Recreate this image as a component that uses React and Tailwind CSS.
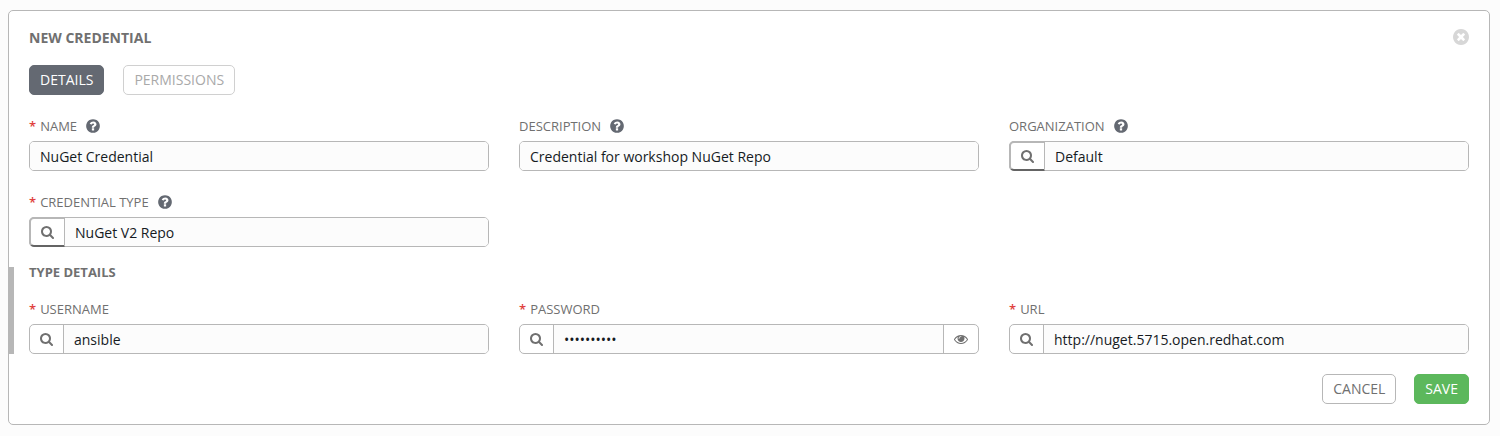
import { useId, useState } from "react";

const PATHS = {
  search:
    "M1216 832q0-185-131.5-316.5t-316.5-131.5-316.5 131.5-131.5 316.5 131.5 316.5 316.5 131.5 316.5-131.5 131.5-316.5zm512 832q0 52-38 90t-90 38q-54 0-90-38l-343-342q-179 124-399 124-143 0-273.5-55.5t-225-150-150-225-55.5-273.5 55.5-273.5 150-225 225-150 273.5-55.5 273.5 55.5 225 150 150 225 55.5 273.5q0 220-124 399l343 343q37 37 37 90z",
  help:
    "M1024 1376v-192q0-14-9-23t-23-9h-192q-14 0-23 9t-9 23v192q0 14 9 23t23 9h192q14 0 23-9t9-23zm256-672q0-88-55.5-163t-138.5-116-170-41q-243 0-371 213-15 24 8 42l132 100q7 6 19 6 16 0 25-12 53-68 86-92 34-24 86-24 48 0 85.5 26t37.5 59q0 38-20 61t-68 45q-63 28-115.5 86.5t-52.5 125.5v36q0 14 9 23t23 9h192q14 0 23-9t9-23q0-19 21.5-49.5t54.5-49.5q32-18 49-28.5t46-35 44.5-48 28-60.5 12.5-81zm384 192q0 209-103 385.5t-279.5 279.5-385.5 103-385.5-103-279.5-279.5-103-385.5 103-385.5 279.5-279.5 385.5-103 385.5 103 279.5 279.5 103 385.5z",
  close:
    "M1277 1122q0-26-19-45l-181-181 181-181q19-19 19-45 0-27-19-46l-90-90q-19-19-46-19-26 0-45 19l-181 181-181-181q-19-19-45-19-27 0-46 19l-90 90q-19 19-19 46 0 26 19 45l181 181-181 181q-19 19-19 45 0 27 19 46l90 90q19 19 46 19 26 0 45-19l181-181 181 181q19 19 45 19 27 0 46-19l90-90q19-19 19-46zm387-226q0 209-103 385.5t-279.5 279.5-385.5 103-385.5-103-279.5-279.5-103-385.5 103-385.5 279.5-279.5 385.5-103 385.5 103 279.5 279.5 103 385.5z",
  eye:
    "M1664 960q-152-236-381-353 61 104 61 225 0 185-131.5 316.5t-316.5 131.5-316.5-131.5-131.5-316.5q0-121 61-225-229 117-381 353 133 205 333.5 326.5t434.5 121.5 434.5-121.5 333.5-326.5zm-720-384q0-20-14-34t-34-14q-125 0-214.5 89.5t-89.5 214.5q0 20 14 34t34 14 34-14 14-34q0-86 61-147t147-61q20 0 34-14t14-34zm848 384q0 34-20 69-140 230-376.5 368.5t-499.5 138.5-499.5-139-376.5-368q-20-35-20-69t20-69q140-229 376.5-368t499.5-139 499.5 139 376.5 368q20 35 20 69z",
};

function Icon({ name, className, viewBox = "0 0 1792 1792" }) {
  return (
    <svg viewBox={viewBox} fill="currentColor" aria-hidden="true" className={className}>
      <path d={PATHS[name]} />
    </svg>
  );
}

function Field({ label, value, required, help, lookup, search, secret }) {
  const id = useId();
  const [text, setText] = useState(value);
  const [shown, setShown] = useState(false);
  return (
    <div className="flex min-w-0 flex-col gap-1">
      <div className="flex h-[22px] items-center">
        <label htmlFor={id} className="text-[13px] leading-[22px] text-[#707070]">
          {required && <span className="mr-1 font-semibold text-[#e0403c]">*</span>}
          {label}
        </label>
        {help && (
          <button type="button" aria-label={`Help for ${label}`} className="ml-2 text-[#646972]">
            <Icon name="help" className="size-4" />
          </button>
        )}
      </div>
      <div className="flex h-[30px] rounded-[5px] border border-[#b7b7b7] bg-white">
        {lookup && (
          <button
            type="button"
            aria-label={`Look up ${label}`}
            className="-my-px -ml-px flex w-9 shrink-0 items-center justify-center rounded-l-[5px] border-2 border-r border-[#b7b7b7] border-b-[#646464] text-[#707070]"
          >
            <Icon name="search" className="size-3.5" viewBox="64 0 1792 1792" />
          </button>
        )}
        {search && (
          <button
            type="button"
            aria-label={`Search ${label}`}
            className="flex w-[34px] shrink-0 items-center justify-center border-r border-[#b7b7b7] text-[#707070]"
          >
            <Icon name="search" className="size-3.5" viewBox="64 0 1792 1792" />
          </button>
        )}
        <input
          id={id}
          type={secret && !shown ? "password" : "text"}
          value={text}
          onChange={(e) => setText(e.target.value)}
          className={`min-w-0 flex-1 bg-[#fcfcfc] px-2.5 pt-0.5 text-sm text-[#161b1f] outline-none ${
            lookup || search ? "" : "rounded-l-sm"
          } ${secret ? "" : "rounded-r-sm"}`}
        />
        {secret && (
          <button
            type="button"
            aria-label="Show password"
            onClick={() => setShown(!shown)}
            className="flex w-[35px] shrink-0 items-center justify-center border-l border-[#b7b7b7] text-[#707070]"
          >
            <Icon name="eye" className="size-3.5" />
          </button>
        )}
      </div>
    </div>
  );
}

const BUTTON = "h-[30px] rounded-[5px] border px-2.5 text-sm";

export default function App() {
  return (
    <div className="min-h-screen bg-[#fcfcfc] py-2.5 pr-2.5 pl-2 font-['Open_Sans',sans-serif]">
      <form
        onSubmit={(e) => e.preventDefault()}
        className="rounded-[5px] border border-[#b7b7b7] bg-white px-5 pt-4 pb-5"
      >
        <header className="flex items-start justify-between">
          <h1 className="text-sm leading-[22px] font-bold text-[#707070]">NEW CREDENTIAL</h1>
          <button type="button" aria-label="Close" className="pt-0.5 text-[#d7d7d7]">
            <Icon name="close" className="size-4" viewBox="128 128 1536 1536" />
          </button>
        </header>

        <nav className="mt-4 flex gap-[19px]">
          <button type="button" className={`${BUTTON} border-[#646972] bg-[#646972] text-white`}>
            DETAILS
          </button>
          <button type="button" className={`${BUTTON} border-[#d0d0d0] bg-white text-[#a9a9a9]`}>
            PERMISSIONS
          </button>
        </nav>

        <div className="mt-5 grid grid-cols-3 gap-x-[30px] gap-y-5">
          <Field label="NAME" value="NuGet Credential" required help />
          <Field label="DESCRIPTION" value="Credential for workshop NuGet Repo" help />
          <Field label="ORGANIZATION" value="Default" help lookup />
          <Field label="CREDENTIAL TYPE" value="NuGet V2 Repo" required help lookup />
        </div>

        <section className="mt-5 -ml-5 border-l-[5px] border-[#b7b7b7] pl-[15px]">
          <h2 className="text-[13px] leading-[11px] font-bold text-[#707070]">TYPE DETAILS</h2>
          <div className="mt-5 grid grid-cols-3 gap-x-[30px]">
            <Field label="USERNAME" value="ansible" required search />
            <Field label="PASSWORD" value="workshop12" required search secret />
            <Field label="URL" value="http://nuget.5715.open.redhat.com" required search />
          </div>
        </section>

        <footer className="mt-5 flex justify-end gap-[18px]">
          <button type="button" className={`${BUTTON} border-[#b7b7b7] bg-white text-[#707070]`}>
            CANCEL
          </button>
          <button type="submit" className={`${BUTTON} border-[#5cb85c] bg-[#5cb85c] text-white`}>
            SAVE
          </button>
        </footer>
      </form>
    </div>
  );
}
